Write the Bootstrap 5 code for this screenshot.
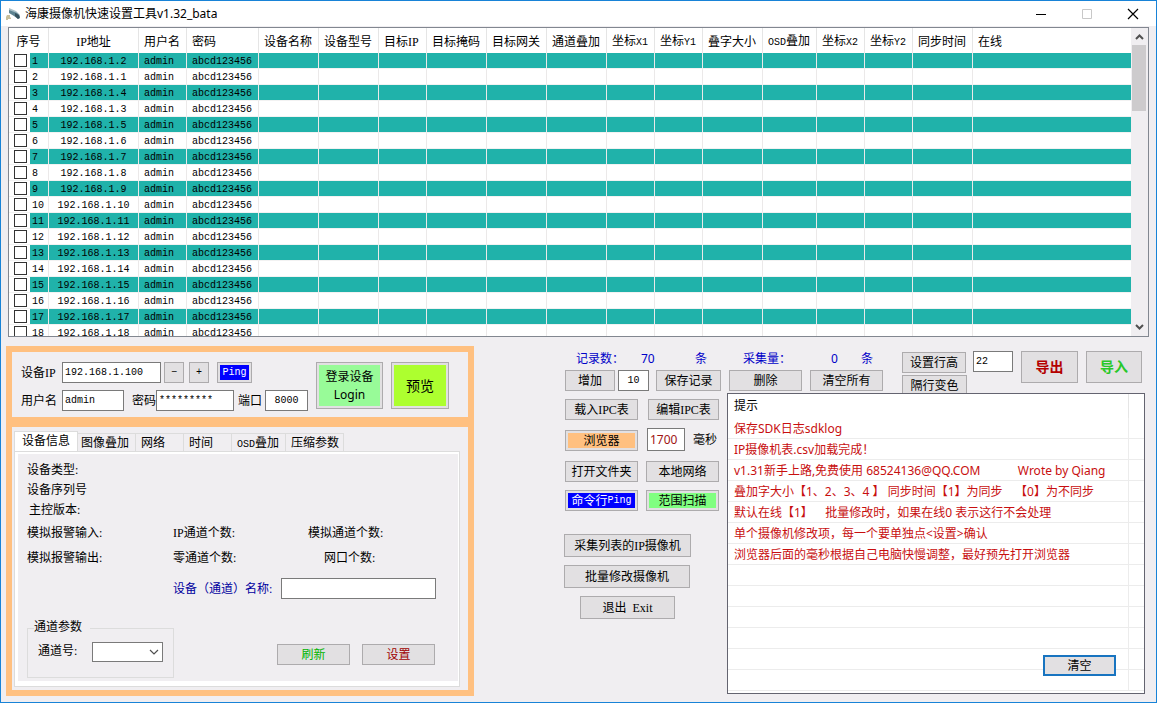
<!DOCTYPE html>
<html lang="zh-CN">
<head>
<meta charset="utf-8">
<meta name="viewport" content="width=device-width, initial-scale=1">
<title>海康摄像机快速设置工具v1.32_bata</title>
<link href="https://cdn.jsdelivr.net/npm/bootstrap@5.3.0/dist/css/bootstrap.min.css" rel="stylesheet">
<style>
:root{--face:#f0eef1;--btn:#e2e0e2;--edge:#adabad;--field:#7a7a7a;--teal:#20b2aa;--orange:#ffc080}
body{font-family:"Liberation Serif","Noto Sans CJK SC",serif;font-size:12px;line-height:16px;color:#000;background:var(--face)}
.app{min-height:100vh;border:1px solid #1883d7;padding-bottom:5px}
.titlebar{height:25px;background:#fff;padding-left:4px}
.titlebar button{width:46px;height:25px;border:0;background:none;padding:0}
/* device grid */
.grid-box{height:310px;margin:1px 7px 0 7px;border:1px solid #828790;background:#fff;overflow:hidden}
.devices{width:100%;table-layout:fixed;border-collapse:separate;border-spacing:0}
.devices th{height:25px;font-weight:400;padding:2px 0 0 5px;border-right:1px solid #e5e5e5;white-space:nowrap}
.devices td{height:16px;line-height:13px;padding:2px 0 0 5px;border-right:1px solid #ebe9e9;border-bottom:1px solid #f2f2f2;white-space:nowrap}
.devices .mid{text-align:center;padding-left:0}
.devices th:last-child,.devices td:last-child{border-right:0}
.devices tr:nth-child(odd) td{background:var(--teal)}
.devices tbody tr td:first-child{padding:0}
.num{display:flex;height:15px;line-height:17px}
.pick{width:21px;background:#fff;padding:1px 0 0 5px;margin-right:2px}
.pick input{appearance:none;display:block;width:13px;height:13px;margin:0;border:1px solid #333;background:#fff;border-radius:0}
.vscroll{width:18px;background:var(--face)}
.vscroll svg{width:17px;height:17px;flex:none}
.thumb{height:66px;background:#cdcbcd;margin:0 2px 0 1px}
/* controls */
.key{background:var(--btn);border:1px solid var(--edge);border-radius:0;padding:0;height:21px;line-height:18px;font-size:12px;color:#000;white-space:nowrap;text-align:center;font-family:inherit}
.key.tint{padding:2px}
.key.tint .fill{display:flex;align-items:center;justify-content:center;height:100%}
.edit{height:21px;border:1px solid var(--field);border-radius:0;background:#fff;padding:0 2px;color:#000;min-width:0}
.ui{font-family:"Noto Sans","Noto Sans CJK SC",sans-serif}
.mono{font-family:"Liberation Mono","Noto Sans CJK SC",monospace;font-size:10px}
.w-s{width:20px}.w-m{width:73px}
.lower{padding:9px 11px 0 5px}
.left-panel{flex:0 0 468px;border:6px solid var(--orange)}
.login{height:75px;border-bottom:10px solid var(--orange);padding:10px 0 0 9px}
.login label{width:41px}
.big{height:47px}
.tabs{padding:4px 0 0 2px}
.tabs .nav-link{font-size:12px;line-height:16px;color:#000;border:1px solid #dcdcdc;border-left:0;border-bottom:0;border-radius:0;padding:1px 0 0 5px;height:18px;background:var(--face);text-align:left;white-space:nowrap}
.tabs .nav-link.active{height:20px;background:#fff;border-left:1px solid #dcdcdc;padding-left:7px}
.sheet{margin:0 8px 3px 2px;border:1px solid #dcdcdc;background:#fff;padding:2px 1px 5px 3px}
.sheet-body{background:var(--face);height:227px;padding:8px 0 0 9px}
.info{display:grid;grid-template-columns:146px 135px 1fr;row-gap:9px;margin-top:7px}
.name-row{padding-left:146px;margin-top:12px}
.group-frame{border:1px solid #dcdcdc;height:50px;width:147px;padding:13px 0 0 10px;position:relative}
.group-frame legend{position:absolute;top:-10px;left:6px;width:56px;font-size:12px;line-height:16px;margin:0;background:var(--face)}
.group-frame label{display:inline-block;width:54px}
.pick-list{width:71px;height:20px;border:1px solid var(--field);border-radius:0;appearance:none;background:#fff;vertical-align:middle}
.chev{position:absolute;right:14px;top:20px;width:10px;height:6px;pointer-events:none}
.stats{color:#0000c8;height:19px;padding:0 16px 0 12px}
.right-zone{flex:1 1 0}
.gap-zone{flex:0 1 90px}
.toolbar-top{height:42px;margin-top:5px}
.stack-mini{height:42px;overflow:hidden;padding-top:1px}
.tools{width:163px;flex:none;padding-top:6px}
.line{display:flex;justify-content:space-between;width:155px;padding-left:1px}
.log{flex:1;border:1px solid #646470;background:#fff;position:relative;height:301px;overflow:hidden}
.log table{width:100%;table-layout:fixed;border-collapse:separate;border-spacing:0}
.log th{height:24px;font-weight:400;padding:0 0 0 6px;border-right:1px solid #e5e5e5}
.log td{height:21px;line-height:18px;padding:2px 0 0 6px;color:#c80f0f;border-right:1px solid #ececec;border-bottom:1px solid #ececec;white-space:pre}
.log th:last-child,.log td:last-child{border-right:0;padding:0}
.clear-key{position:absolute;right:28px;bottom:17px;border:2px solid #1874c0;line-height:16px}
</style>
</head>
<body>
<div class="app d-flex flex-column">
  <header class="titlebar ui d-flex align-items-center">
    <svg width="16" height="16" viewBox="0 0 16 16" aria-hidden="true"><path d="M4 2l7 3 4 4-3 1-8-4z" fill="#a9c0c8"/><path d="M4 4l8 3 3 3-2 3-4-3-5-3z" fill="#5d8391"/><path d="M10 7l4 2 1 3-2 1-3-3z" fill="#35515e"/><path d="M2 9h3v2l1 1v1H3v1H1v-3z" fill="#c9bf9a"/></svg>
    <span class="ms-1">海康摄像机快速设置工具v1.32_bata</span>
    <div class="ms-auto d-flex">
      <button aria-label="最小化"><svg width="12" height="12"><path d="M1 6.500h10" stroke="#000"/></svg></button>
      <button aria-label="最大化" disabled><svg width="12" height="12"><path d="M1.500 1.500h9v9h-9z" stroke="#c8c8c8" fill="none"/></svg></button>
      <button aria-label="关闭"><svg width="12" height="12"><path d="M1 1l10 10M11 1L1 11" stroke="#000" stroke-width="1.200"/></svg></button>
    </div>
  </header>

  <section class="grid-box d-flex">
    <div class="flex-fill">
      <table class="devices">
        <colgroup><col style="width:40px"><col style="width:90px"><col style="width:48px"><col style="width:72px"><col style="width:60px"><col style="width:60px"><col style="width:48px"><col style="width:60px"><col style="width:60px"><col style="width:60px"><col style="width:48px"><col style="width:48px"><col style="width:60px"><col style="width:54px"><col style="width:48px"><col style="width:48px"><col style="width:60px"><col></colgroup>
        <thead><tr><th class="mid">序号</th><th class="mid">IP地址</th><th>用户名</th><th>密码</th><th>设备名称</th><th>设备型号</th><th>目标IP</th><th>目标掩码</th><th>目标网关</th><th>通道叠加</th><th>坐标<span class="mono">X1</span></th><th>坐标<span class="mono">Y1</span></th><th>叠字大小</th><th><span class="mono">OSD</span>叠加</th><th>坐标<span class="mono">X2</span></th><th>坐标<span class="mono">Y2</span></th><th>同步时间</th><th>在线</th></tr></thead>
        <tbody id="rows" class="mono"></tbody>
      </table>
    </div>
    <div class="vscroll d-flex flex-column" aria-hidden="true">
      <svg viewBox="0 0 17 17"><path d="M5 11l3.500-3.500L12 11" fill="none" stroke="#505050" stroke-width="2"/></svg>
      <div class="thumb"></div>
      <svg class="mt-auto" viewBox="0 0 17 17"><path d="M5 6l3.500 3.500L12 6" fill="none" stroke="#505050" stroke-width="2"/></svg>
    </div>
  </section>

  <main class="lower d-flex flex-fill align-items-start">
    <section class="left-panel">
      <form class="login d-flex">
        <div>
          <div class="d-flex align-items-center">
            <label for="ip">设备IP</label>
            <input id="ip" class="edit mono" style="width:99px" value="192.168.1.100">
            <button type="button" class="key mono w-s" style="margin:0 5px 0 3px">−</button>
            <button type="button" class="key mono w-s">+</button>
            <button type="button" class="key tint ms-2" style="width:35px"><span class="fill mono text-white" style="background:#00f">Ping</span></button>
          </div>
          <div class="d-flex align-items-center" style="margin-top:7px">
            <label for="user">用户名</label>
            <input id="user" class="edit mono" style="width:62px" value="admin">
            <label for="pwd" class="ms-2" style="width:24px">密码</label>
            <input id="pwd" class="edit mono" style="width:78px" value="*********">
            <label for="port" class="ms-1" style="width:27px">端口</label>
            <input id="port" class="edit mono text-center" style="width:43px" value="8000">
          </div>
        </div>
        <button type="button" class="key tint big ui ms-2" style="width:67px"><span class="fill" style="background:#98fb98">登录设备<br>Login</span></button>
        <button type="button" class="key tint big ui ms-2" style="width:58px"><span class="fill" style="background:#adff2f;font-size:14px">预览</span></button>
      </form>

      <ul class="nav tabs align-items-end">
        <li><a href="#info" class="nav-link active" style="width:64px">设备信息</a></li>
        <li><a href="#image" class="nav-link" style="width:58px;padding-left:3px">图像叠加</a></li>
        <li><a href="#net" class="nav-link" style="width:48px">网络</a></li>
        <li><a href="#time" class="nav-link" style="width:48px">时间</a></li>
        <li><a href="#osd" class="nav-link" style="width:54px"><span class="mono">OSD</span>叠加</a></li>
        <li><a href="#zip" class="nav-link" style="width:58px">压缩参数</a></li>
      </ul>
      <div class="sheet" id="info">
        <div class="sheet-body">
          <div>设备类型:</div>
          <div style="margin-top:4px">设备序列号</div>
          <div style="margin-top:4px;padding-left:2px">主控版本:</div>
          <div class="info">
            <span>模拟报警输入:</span><span>IP通道个数:</span><span>模拟通道个数:</span>
            <span>模拟报警输出:</span><span>零通道个数:</span><span class="ps-3">网口个数:</span>
          </div>
          <div class="name-row d-flex align-items-center">
            <label for="chname" style="width:108px;color:#0000a0">设备（通道）名称:</label>
            <input id="chname" class="edit" style="width:155px">
          </div>
          <div class="d-flex align-items-start" style="margin-top:29px">
            <fieldset class="group-frame">
              <legend>通道参数</legend>
              <label for="chno">通道号:</label><select id="chno" class="pick-list"></select>
              <svg class="chev" viewBox="0 0 10 6"><path d="M1 1l4 4 4-4" fill="none" stroke="#505050" stroke-width="1.200"/></svg>
            </fieldset>
            <div class="d-flex" style="margin:16px 0 0 103px;gap:12px">
              <button type="button" class="key w-m" style="color:#00b400">刷新</button>
              <button type="button" class="key w-m" style="color:#a00000">设置</button>
            </div>
          </div>
        </div>
      </div>
    </section>

    <div class="gap-zone"></div>

    <section class="right-zone">
      <div class="toolbar-top d-flex">
        <div>
          <div class="stats ui d-flex"><span style="width:65px">记录数：</span><span style="width:54px">70</span><span style="width:48px">条</span><span style="width:88px">采集量：</span><span style="width:30px">0</span><span>条</span></div>
          <div class="d-flex" style="margin-left:1px">
            <button class="key" style="width:50px">增加</button>
            <input class="edit mono text-center" aria-label="增加数量" style="width:31px;margin:0 7px 0 3px" value="10">
            <button class="key" style="width:65px">保存记录</button>
            <button class="key w-m ms-2">删除</button>
            <button class="key w-m ms-2">清空所有</button>
          </div>
        </div>
        <div class="ms-auto d-flex align-items-start">
          <div class="stack-mini d-flex flex-column">
            <button class="key flex-shrink-0" style="width:64px">设置行高</button>
            <button class="key flex-shrink-0" style="width:65px;margin-top:2px">隔行变色</button>
          </div>
          <input class="edit mono" aria-label="行高" style="width:40px;margin:0 8px 0 6px" value="22">
          <button class="key ui fw-bold" style="width:57px;height:32px;color:#b40000;font-size:14px">导出</button>
          <button class="key ui fw-bold" style="width:56px;height:32px;margin:0 3px 0 8px;color:#28c828;font-size:14px">导入</button>
        </div>
      </div>
      <div class="d-flex">
        <div class="tools">
          <div class="line"><button class="key w-m">载入IPC表</button><button class="key" style="width:71px">编辑IPC表</button></div>
          <div class="line align-items-end" style="margin-top:8px">
            <button class="key tint w-m"><span class="fill" style="background:#ffc080">浏览器</span></button>
            <div class="d-flex align-items-center"><input id="ms" class="edit ui" style="width:38px;height:23px;color:#a01414" value="1700"><label for="ms" class="ms-2" style="width:26px">毫秒</label></div>
          </div>
          <div class="line" style="margin-top:10px"><button class="key w-m">打开文件夹</button><button class="key w-m">本地网络</button></div>
          <div class="line" style="margin-top:8px"><button class="key tint w-m"><span class="fill text-white" style="background:#00f">命令行<span class="mono">Ping</span></span></button><button class="key tint w-m"><span class="fill" style="background:#80ff80">范围扫描</span></button></div>
          <div style="margin-top:23px"><button class="key" style="width:127px;height:23px">采集列表的IP摄像机</button></div>
          <div style="margin-top:8px"><button class="key" style="width:126px;height:23px">批量修改摄像机</button></div>
          <div style="margin-top:8px"><button class="key ms-3" style="width:95px;height:23px">退出&nbsp; Exit</button></div>
        </div>
        <div class="log ui">
          <table>
            <colgroup><col><col style="width:15px"></colgroup>
            <thead><tr><th>提示</th><th></th></tr></thead>
            <tbody id="log"></tbody>
          </table>
          <button class="key clear-key w-m">清空</button>
        </div>
      </div>
    </section>
  </main>
</div>
<script src="https://cdn.jsdelivr.net/npm/bootstrap@5.3.0/dist/js/bootstrap.bundle.min.js"></script>
<script>
const hosts = [2,1,4,3,5,6,7,8,9,10,11,12,13,14,15,16,17,18];
document.getElementById('rows').innerHTML = hosts.map((h, i) =>
  `<tr><td><label class="num"><span class="pick"><input type="checkbox"></span>${i + 1}</label></td>` +
  `<td class="mid">192.168.1.${h}</td><td>admin</td><td>abcd123456</td>${'<td></td>'.repeat(14)}</tr>`).join('');
const notes = ['保存SDK日志sdklog', 'IP摄像机表.csv加载完成！',
  'v1.31新手上路,免费使用 68524136@QQ.COM            Wrote by Qiang',
  '叠加字大小【1、2、3、4 】 同步时间【1】为同步    【0】为不同步',
  '默认在线【1】    批量修改时，如果在线0 表示这行不会处理',
  '单个摄像机修改项，每一个要单独点<设置>确认',
  '浏览器后面的毫秒根据自己电脑快慢调整，最好预先打开浏览器', '', '', '', '', '', ''];
const log = document.getElementById('log');
notes.forEach(t => { const r = log.insertRow(); r.insertCell().textContent = t; r.insertCell(); });
</script>
</body>
</html>
